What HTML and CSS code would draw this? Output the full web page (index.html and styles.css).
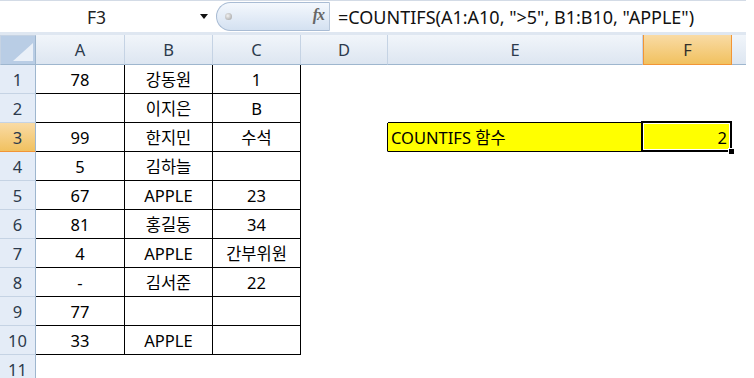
FILE: index.html
```html
<!DOCTYPE html>
<html lang="ko">
<head>
    <meta charset="UTF-8">
    <meta name="viewport" content="width=device-width, initial-scale=1.0">
    <title>COUNTIFS</title>
    <link rel="stylesheet" href="styles.css">
</head>
<body>
    <div class="formula-bar">
        <div class="name-box">
            <span class="name">F3</span>
            <span class="arrow"></span>
        </div>
        <div class="fx-button">
            <span class="knob"></span>
            <span class="fx">fx</span>
        </div>
        <div class="formula">=COUNTIFS(A1:A10, "&gt;5", B1:B10, "APPLE")</div>
    </div>

    <div class="sheet">
        <div class="row head">
            <div class="corner">
                <svg width="22" height="20" viewBox="0 0 22 20"><path d="M1 19 L21 1 L21 19 Z" fill="#f2f6fb" opacity="0.85"/></svg>
            </div>
            <div class="col">A</div>
            <div class="col">B</div>
            <div class="col">C</div>
            <div class="col">D</div>
            <div class="col">E</div>
            <div class="col active">F</div>
            <div class="col tail"></div>
        </div>

        <div class="row">
            <div class="num">1</div>
            <div class="cell b">78</div><div class="cell b">강동원</div><div class="cell b">1</div>
            <div class="cell"></div><div class="cell"></div><div class="cell"></div><div class="cell"></div>
        </div>
        <div class="row">
            <div class="num">2</div>
            <div class="cell b"></div><div class="cell b">이지은</div><div class="cell b">B</div>
            <div class="cell"></div><div class="cell under"></div><div class="cell under"></div><div class="cell"></div>
        </div>
        <div class="row">
            <div class="num active">3</div>
            <div class="cell b">99</div><div class="cell b">한지민</div><div class="cell b">수석</div>
            <div class="cell edge"></div>
            <div class="cell b hl left">COUNTIFS 함수</div>
            <div class="cell b hl right selected">2<span class="handle"></span></div>
            <div class="cell"></div>
        </div>
        <div class="row">
            <div class="num">4</div>
            <div class="cell b">5</div><div class="cell b">김하늘</div><div class="cell b"></div>
            <div class="cell"></div><div class="cell"></div><div class="cell"></div><div class="cell"></div>
        </div>
        <div class="row">
            <div class="num">5</div>
            <div class="cell b">67</div><div class="cell b">APPLE</div><div class="cell b">23</div>
            <div class="cell"></div><div class="cell"></div><div class="cell"></div><div class="cell"></div>
        </div>
        <div class="row">
            <div class="num">6</div>
            <div class="cell b">81</div><div class="cell b">홍길동</div><div class="cell b">34</div>
            <div class="cell"></div><div class="cell"></div><div class="cell"></div><div class="cell"></div>
        </div>
        <div class="row">
            <div class="num">7</div>
            <div class="cell b">4</div><div class="cell b">APPLE</div><div class="cell b">간부위원</div>
            <div class="cell"></div><div class="cell"></div><div class="cell"></div><div class="cell"></div>
        </div>
        <div class="row">
            <div class="num">8</div>
            <div class="cell b">-</div><div class="cell b">김서준</div><div class="cell b">22</div>
            <div class="cell"></div><div class="cell"></div><div class="cell"></div><div class="cell"></div>
        </div>
        <div class="row">
            <div class="num">9</div>
            <div class="cell b">77</div><div class="cell b"></div><div class="cell b"></div>
            <div class="cell"></div><div class="cell"></div><div class="cell"></div><div class="cell"></div>
        </div>
        <div class="row">
            <div class="num">10</div>
            <div class="cell b">33</div><div class="cell b">APPLE</div><div class="cell b"></div>
            <div class="cell"></div><div class="cell"></div><div class="cell"></div><div class="cell"></div>
        </div>
        <div class="row">
            <div class="num">11</div>
            <div class="cell"></div><div class="cell"></div><div class="cell"></div>
            <div class="cell"></div><div class="cell"></div><div class="cell"></div><div class="cell"></div>
        </div>
    </div>
</body>
</html>
```

FILE: styles.css
```css
body {
    margin: 0;
    background: #ffffff;
    font-family: "Noto Sans", "Noto Sans CJK KR", sans-serif;
    font-size: 16.5px;
    color: #000;
    overflow: hidden;
}
.formula-bar {
    display: flex;
    width: 746px;
    height: 35px;
    box-sizing: border-box;
    border-top: 1px solid #d3dbe6;
    border-bottom: 3px solid #dfe7f1;
    background: #ffffff;
}
.name-box {
    position: relative;
    width: 213px;
    display: flex;
    align-items: center;
    justify-content: center;
    padding-right: 20px;
    box-sizing: border-box;
}
.name {
    font-size: 17.5px;
    color: #222;
}
.arrow {
    position: absolute;
    right: 5px;
    top: 13px;
    width: 0;
    height: 0;
    border-left: 4px solid transparent;
    border-right: 4px solid transparent;
    border-top: 5px solid #111;
}
.fx-button {
    position: relative;
    margin: 1px 0 0 3px;
    width: 114px;
    height: 29px;
    box-sizing: border-box;
    border: 1px solid #a9bcd4;
    border-right: 1px solid #b8c7da;
    border-radius: 15px 0 0 15px;
    background: linear-gradient(#f4f8fd, #d4e1f1);
}
.knob {
    position: absolute;
    left: 8px;
    top: 10px;
    width: 7px;
    height: 7px;
    border-radius: 50%;
    background: radial-gradient(circle at 40% 40%, #f2f2f2, #9a9a9a);
}
.fx {
    position: absolute;
    right: 5px;
    top: 3px;
    font-family: "Liberation Serif", serif;
    font-style: italic;
    font-weight: bold;
    font-size: 16px;
    color: #666;
    letter-spacing: -1px;
}
.formula {
    flex: 1;
    padding-left: 8px;
    display: flex;
    align-items: center;
    font-size: 18px;
    color: #111;
    white-space: nowrap;
}
.sheet {
    width: 746px;
}
.row {
    display: grid;
    grid-template-columns: 36px 89px 88px 88px 87px 255px 89px 14px;
    height: 29px;
}
.row > div {
    box-sizing: border-box;
    display: flex;
    align-items: center;
    justify-content: center;
    white-space: nowrap;
}
.head {
    height: 30px;
}
.corner {
    background: #b9cde5;
    border-right: 1px solid #9eb6ce;
    border-bottom: 1px solid #9eb6ce;
    border-top: 1px solid #c6d3e3;
    border-left: 1px solid #c6d3e3;
    padding: 4px 0 0 10px;
}
.col {
    background: linear-gradient(#f1f5fa, #dde6f1);
    border-right: 1px solid #c5d3e4;
    border-bottom: 1px solid #9eb6ce;
    color: #2c3a4c;
    font-size: 16.5px;
}
.col.active {
    background: linear-gradient(#f9dba5, #f1c15f);
    border-right: 1px solid #f29536;
    border-left: 1px solid #f29536;
    border-bottom: 1px solid #f29536;
    color: #33302a;
}
.col.tail {
    border-right: none;
}
.num {
    background: #e4ecf7;
    border-right: 1px solid #9eb6ce;
    border-bottom: 1px solid #c5d3e4;
    color: #2c3a4c;
    font-size: 16.5px;
}
.num.active {
    background: linear-gradient(#f9dba5, #f1c15f);
    border-bottom: 1px solid #f29536;
}
.cell {
    border-right: 1px solid transparent;
    border-bottom: 1px solid transparent;
}
.cell.b {
    border-right: 1px solid #000;
    border-bottom: 1px solid #000;
}
.cell.under {
    border-bottom: 1px solid #000;
}
.cell.edge {
    border-right: 1px solid #000;
}
.cell.hl {
    background: #ffff00;
}
.row > .left {
    justify-content: flex-start;
    padding-left: 3px;
}
.row > .right {
    justify-content: flex-end;
    padding-right: 4px;
}
.selected {
    position: relative;
}
.selected::before {
    content: "";
    position: absolute;
    left: -2px;
    top: -2px;
    right: -1px;
    bottom: -1px;
    border: 2px solid #000;
    outline: 1px solid #fff;
    outline-offset: -3px;
}
.handle {
    position: absolute;
    right: -4px;
    bottom: -4px;
    width: 5px;
    height: 5px;
    background: #000;
    border: 1px solid #fff;
}
```
